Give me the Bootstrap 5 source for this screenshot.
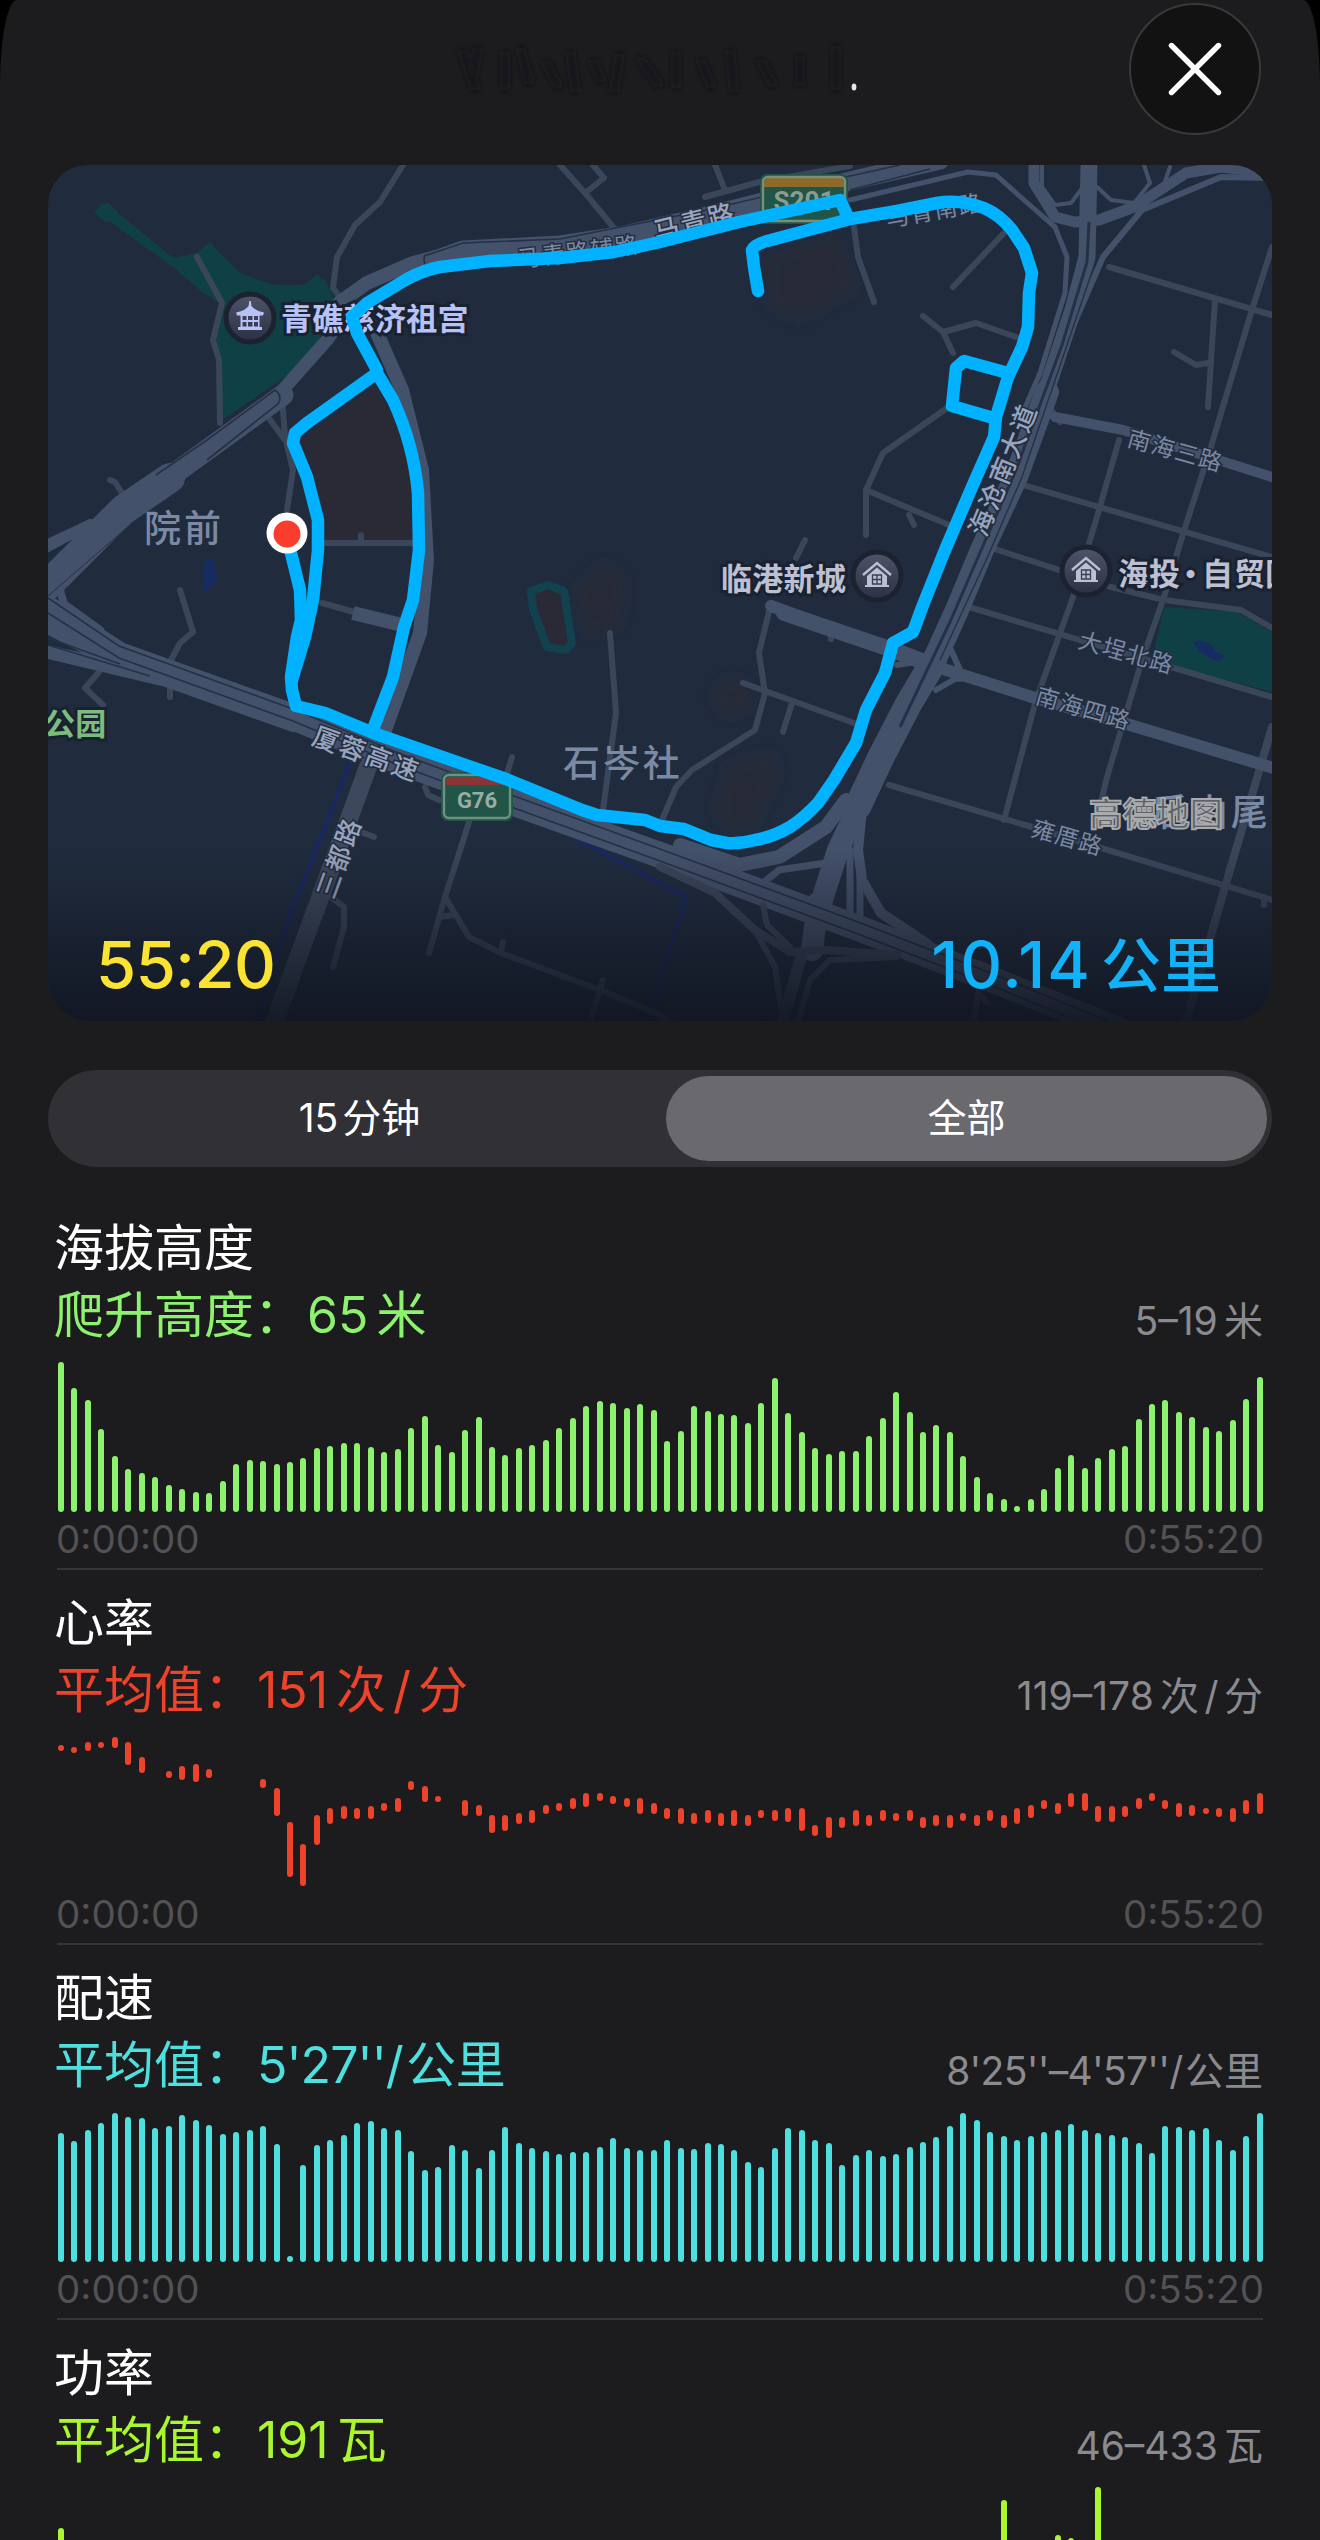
<!doctype html>
<html lang="zh-CN">
<head>
  <meta charset="utf-8">
  <meta name="viewport" content="width=device-width, initial-scale=1">
  <title>体能训练路线</title>
  <link href="https://cdn.jsdelivr.net/npm/bootstrap@5.3.0/dist/css/bootstrap.min.css" rel="stylesheet">

  <style>
    body {
      background: #000;
      color: #fff;
      font-family: Inter, "Noto Sans CJK SC", sans-serif;
    }
    .sheet {
      height: 2540px;
      padding: 0 48px;
      background: #1c1c1e;
      border-radius: 17px 17px 0 0 / 85px 85px 0 0;
      overflow: hidden;
    }
    .top-bar {
      height: 165px;
      padding: 3px 11px 0 0;
    }
    .top-bar .smear {
      width: 420px;
      height: 80px;
      margin: 26px 269px 0 0;
    }
    .close-btn {
      width: 132px;
      height: 132px;
      background: #121213;
      border: 2px solid #39393b;
    }
    .map-card {
      height: 856px;
      border-radius: 40px;
      background: #202c3e;
    }
    .map-card svg {
      display: block;
      font-family: "Noto Sans CJK SC", sans-serif;
    }
    .map-stats {
      left: 48px;
      right: 51px;
      bottom: 7px;
      font-size: 65px;
      line-height: 96px;
      font-weight: 500;
    }
    .map-stats .time { color: #fbe334; letter-spacing: -.5px; }
    .map-stats .dist { color: #12b2f8; letter-spacing: 2px; }
    .map-stats .dist span { font-size: 60px; letter-spacing: 0; margin-left: 9px; }

    .segments {
      height: 97px;
      margin-top: 49px;
      padding: 6px 5px;
      background: #313035;
      font-size: 39px;
    }
    .segments .seg-left { width: 613px; }
    .segments .active { background: #6a696e; }

    .metric {
      height: 375px;
      padding-top: 20px;
      margin: 0 9px;
      border-bottom: 2px solid #353537;
      white-space: nowrap;
    }
    .metric .name,
    .metric .value {
      font-size: 50px;
      line-height: 67px;
      margin-left: -3px;
    }
    .metric .value b { font-weight: 400; margin-left: 3px; }
    .metric .range {
      font-size: 39px;
      line-height: 56px;
      color: #8b8b8f;
    }
    .metric .unit { margin-left: .16em; }
    .metric .slash { margin: 0 .14em; }
    .pace .value b,
    .pace .range { letter-spacing: -.018em; }
    .pace .unit { margin-left: .06em; letter-spacing: 0; }
    .metric .value { color: var(--tint); }
    .bars {
      height: 150px;
      margin: 13px 0 -1px 1px;
    }
    .bars i {
      width: 6px;
      border-radius: 3px;
      background: var(--tint);
    }
    .ticks {
      font-size: 38.5px;
      line-height: 56px;
      color: #525255;
      margin: 0 -1px;
    }
    .alt { --tint: #8df26e; }
    .heart { --tint: #ee432b; }
    .pace { --tint: #4ee0df; }
    .power { --tint: #a9f72c; }

    .rd { fill: none; stroke: #43516a; stroke-linejoin: round; stroke-linecap: round; }
    .minor { stroke: #3a465a; stroke-width: 6; }
    .slit { fill: none; stroke: #243146; stroke-width: 1.6; }
    .poi { font-size: 31px; font-weight: 700; paint-order: stroke; stroke: #1a2231; stroke-width: 6; fill: #bcc0d2; letter-spacing: .3px; }
    .area { font-size: 37px; font-weight: 500; fill: #7c89a3; letter-spacing: 2.9px; }
    .road-name { font-size: 23px; fill: #7b88a2; text-anchor: middle; dominant-baseline: central; paint-order: stroke; stroke: #222d40; stroke-width: 3; letter-spacing: 1.5px; }
    .road-main { font-size: 26px; fill: #98a4bd; letter-spacing: 2px; font-weight: 500; }
  </style>
</head>
<body>
  <div class="sheet">
    <header class="top-bar d-flex justify-content-end align-items-start">
      <svg class="smear" viewBox="440 29 420 80">
        <defs><filter id="soft"><feGaussianBlur stdDeviation="3"/></filter></defs>
        <g fill="none" stroke="#18181a" stroke-width="6" filter="url(#soft)">
          <path d="M462 50l14 40M478 48l-6 34M505 52v38M520 48l10 36M545 62l14 26M570 52l6 40M592 60l10 22M620 54l-6 38M640 58l20 28M676 52v36M700 60l12 28M730 50l4 42M760 60l14 26M800 56v30M836 46v44"/>
        </g>
        <ellipse cx="854" cy="87" rx="2.4" ry="3.6" fill="#e8e8e8"/>
      </svg>
      <button type="button" class="close-btn rounded-circle d-flex align-items-center justify-content-center p-0" aria-label="关闭">
        <svg width="54" height="54" viewBox="0 0 54 54" stroke="#fff" stroke-width="5.4" stroke-linecap="round">
          <path d="M3.5 3.5l47 47M50.5 3.5l-47 47"/>
        </svg>
      </button>
    </header>

    <div class="map-card position-relative overflow-hidden">
      <svg width="1224" height="856" viewBox="48 165 1224 856">
        <defs>
          <linearGradient id="fade" x1="0" y1="0" x2="0" y2="1">
            <stop offset="0" stop-color="#10141f" stop-opacity="0"/>
            <stop offset="1" stop-color="#10141f" stop-opacity=".88"/>
          </linearGradient>
          <linearGradient id="pin" x1="0" y1="0" x2="0" y2="1">
            <stop offset="0" stop-color="#50546a"/>
            <stop offset="1" stop-color="#2c3044"/>
          </linearGradient>
          <filter id="haze"><feGaussianBlur stdDeviation="6"/></filter>
        </defs>

        <!-- 地块 -->
        <g fill="#2a2a36">
          <path d="M377 385L400 430L415 500L416 540L325 540L318 500L298 443z"/>
          <g filter="url(#haze)" opacity=".65">
            <path d="M765 255l75 -20l15 55l-55 30l-30 -15z"/>
            <path d="M575 590l30 -28l20 20l-5 45l-35 8z"/>
            <circle cx="733" cy="697" r="18"/>
            <path d="M728 765l45 -12l5 20l-22 50l-25 8l-16 -20z"/>
          </g>
        </g>
        <path fill="#0f4045" d="M102 203L118 213L173 258L197 253L210 242L217 250L240 273L273 285L303 285L317 275L325 280L335 300L320 337L300 367L222 420L219 360L213 340L220 303L203 293L177 270L112 223L95 212z"/>
        <path fill="#0f4045" stroke="#0f4045" stroke-width="6" stroke-linejoin="round" d="M107 206L115 213L106 219L98 212z"/>
        <path fill="#0f4045" d="M1164 607L1237 612L1272 632L1272 692L1152 660z"/>
        <path fill="#152c62" d="M1194 642q10 -4 19 5q4 8 13 9l-7 5q-22 -6 -25 -19zM205 560l8 0l4 22l-14 10z"/>
        <path fill="#2a2a36" stroke="#12414f" stroke-width="8" stroke-linejoin="round" d="M548 585L531 591L533 609L547 647L566 650L572 643L564 591z"/>
        <g fill="none" stroke="#1a2860" stroke-width="4">
          <path d="M350 763L293 907L255 1022"/>
          <path d="M566 833L660 883L686 897L660 980L650 1022"/>
        </g>

        <!-- 支路 -->
        <g class="rd minor">
          <path d="M403 165L380 202L355 225L337 257L333 288L343 302"/>
          <path d="M197 257L222 303L213 340L219 360L220 423"/>
          <path d="M122 493L115 482L110 480"/>
          <path d="M282 397L285 437L293 470L287 510M268 417L285 440"/>
          <path d="M180 590L193 632L180 643L170 662V697"/>
          <path d="M99 672L85 688L103 705"/>
          <path d="M323 543H413M361 535V543M322 603L400 625"/>
          <path d="M610 633L616 713L603 810M512 757L506 777"/>
          <path d="M469 822L445 897L429 953M445 897L469 937L501 953L600 990L660 1015L675 1024M439 917L455 915M503 942L501 952M603 980L590 1022"/>
          <path d="M332 898L344 907V927L333 967M356 830L374 837M425 787L428 795L439 800"/>
          <path d="M560 165L585 193L614 228M593 165L604 178L585 193M715 165L725 190M705 197L759 182L850 166"/>
          <path d="M854 227L858 257L874 302M1004 233L953 287"/>
          <path d="M923 316L943 332L953 353M943 332L976 323L1016 337"/>
          <path d="M947 408L883 453L866 490V535M866 490L949 525M909 515L914 525M805 540L796 558"/>
          <path d="M1109 267L1272 315M1215 300L1208 407M1174 352L1196 365L1208 363"/>
          <path d="M1272 247L1251 313L1210 450L1182 537L1164 597L1142 660L1107 777L1098 815"/>
          <path d="M1119 440L1099 510L1073 597L1036 700L1004 820"/>
          <path d="M1016 483L1272 557M992 548L1059 570L1111 587L1164 600L1241 610L1272 628"/>
          <path d="M972 608L1272 697M1049 407L1060 422"/>
          <path d="M771 603L759 653L765 693L755 730L692 770L676 787L662 820M743 683L854 723M792 703L783 732M831 632V639"/>
          <path d="M889 785L1032 827L1272 900M1264 897V905"/>
          <path d="M978 993L974 1022M978 993L988 1003"/>
        </g>
        <g class="rd" stroke-width="8">
          <path d="M1272 727L1225 887L1186 1022" stroke="#3a465a"/>
          <path d="M1055 417L1123 430L1272 477" stroke-width="10"/>
          <path d="M353 613L402 625" stroke-width="14" stroke-linecap="butt"/>
        </g>

        <!-- 主干道 -->
        <g class="rd">
          <path stroke-width="14" d="M377 333L402 390L422 470L427 560L420 633L384 733L368 767"/>
          <path stroke-width="18" stroke="#3c485c" d="M368 767L273 1026"/>
          <path stroke-width="14" d="M340 302L367 283L413 263L463 250"/>
          <path stroke-width="19" d="M430 262L463 250L560 245L620 236L707 216L759 203L850 181L940 160"/>
          <path stroke-width="5" d="M850 200L968 172L996 175L1024 200L1055 227L1067 257L1065 293L1040 373L1024 410"/>
          <path stroke-width="13" d="M350 307L327 340L280 393"/>
          <path stroke-width="21" d="M283 395L207 450L160 484"/>
          <path stroke-width="30" d="M170 478L123 510L48 585"/>
          <path stroke-width="8" d="M48 543L90 523M48 548L100 520M60 590L64 604L100 630"/>
          <path stroke-width="26" d="M40 604L119 655L293 717L396 760L514 803L660 855L858 928L988 978L1119 1030"/>
          <path stroke-width="14" d="M40 650L166 680L293 725M44 625L130 670"/>
          <path stroke-width="11" d="M1034 165L1034 183L1055 217L1075 222L1099 220L1134 207L1186 173L1221 167L1272 173"/>
          <path stroke-width="6" d="M1272 178L1221 177L1142 210L1103 257L1083 303L1067 340"/>
          <path stroke-width="4" d="M1042 165L1042 187L1055 205L1071 203L1083 187M1097 187L1111 200L1134 203L1150 183L1144 165M1170 167L1162 190"/>
          <path stroke-width="17" d="M1089 165L1087 257L1073 310L1043 400"/>
          <path stroke-width="24" d="M1047 392L1016 477L982 550L957 610L933 663"/>
          <path stroke-width="27" d="M933 663L909 703L881 757L858 806"/>
          <path stroke-width="22" d="M862 800L838 850L822 900M818 903L812 950"/>
          <path stroke-width="16" d="M784 613L893 650L937 667"/>
          <path stroke-width="12" d="M937 667L1032 697L1130 725L1280 770M771 606L790 613"/>
          <path stroke-width="6" d="M936 690L955 679L970 678M951 650L961 672M897 665L915 662"/>
          <path stroke-width="14" d="M680 845L739 865L779 857L826 827L846 800"/>
          <path stroke-width="10" d="M862 810L858 850L862 880L881 913L929 945"/>
          <path stroke-width="7" d="M850 850V920M860 870V926M763 883L779 870L826 863"/>
          <path stroke-width="8" d="M660 867L715 893L755 930L790 952L826 950L897 955" stroke="#3a465a"/>
          <path stroke-width="6" d="M755 930L775 967L783 1022M897 957L830 960L810 980L798 1022M763 905L767 925L790 947" stroke="#3a465a"/>
          <path stroke-width="12" d="M801 957L782 1024" stroke="#3a465a"/>
        </g>
        <g class="slit">
          <path d="M48 598L119 646L293 709L396 752L514 796L660 849L858 922L988 972L1110 1022"/>
          <path d="M48 613L119 658L293 721L396 764L514 808L660 861L858 934L988 984L1080 1022"/>
          <path d="M48 638L120 664M48 645L150 676"/>
          <path d="M156 475L207 440L275 390q8 6 3 14L250 426L207 460"/>
          <path d="M48 596L130 525L250 440" stroke-width="1"/>
          <path d="M425 255q-3 7 3 12M424 256L463 243L560 239L707 210L850 176L900 165"/>
          <path d="M850 190L930 169"/>
          <path d="M1089 222L1087 262L1062 345L1016 470L982 548L950 622L900 727" stroke-width="3"/>
          <path d="M1096 260L1022 477L988 556L940 660" stroke-width="1.4"/>
        </g>

        <!-- 道路名 -->
        <text class="road-name road-main" transform="translate(694 220) rotate(-14)">马青路</text>
        <text class="road-name" transform="translate(578 250) rotate(-7)">马青路辅路</text>
        <text class="road-name" transform="translate(934 209) rotate(-10)">马青南路</text>
        <text class="road-name road-main" transform="translate(1001 469) rotate(-68)">海沧南大道</text>
        <text class="road-name road-main" transform="translate(337 857) rotate(-70)">三都路</text>
        <text class="road-name road-main" transform="translate(367 752) rotate(20)">厦蓉高速</text>
        <text class="road-name" transform="translate(1176 449) rotate(15.5)">南海三路</text>
        <text class="road-name" transform="translate(1127 651) rotate(15.5)">大埕北路</text>
        <text class="road-name" transform="translate(1084 707) rotate(16)">南海四路</text>
        <text class="road-name" transform="translate(1068 836) rotate(16)">雍厝路</text>

        <!-- 路牌 -->
        <g font-family="Roboto" font-weight="700" text-anchor="middle">
          <rect x="760" y="174" width="88" height="50" rx="7" fill="#205547"/>
          <path fill="#8d6a29" d="M764 187v-4q0 -5 5 -5h70q5 0 5 5v4z"/>
          <rect x="763" y="177" width="82" height="44" rx="5" fill="none" stroke="#7b8f78" stroke-width="2.4"/>
          <text x="804" y="210" font-size="26" fill="#8b9d90">S201</text>
          <rect x="441" y="772" width="72" height="49" rx="7" fill="#205547"/>
          <path fill="#8b3437" d="M446 785v-4q0 -4 5 -4h53q5 0 5 4v4z"/>
          <rect x="444" y="775" width="66" height="43" rx="5" fill="none" stroke="#6f9181" stroke-width="2.4"/>
          <text x="477" y="808" font-size="22" fill="#9aaca3">G76</text>
        </g>

        <!-- 地名 -->
        <text class="area" x="144" y="542">院前</text>
        <text class="area" x="563" y="777">石岑社</text>
        <text class="area" x="1151" y="826">后山尾</text>
        <text class="poi" x="44" y="735" style="fill: #7cbc7c">公园</text>
        <text class="poi" x="281" y="330" style="fill: #b7c2f6">青礁慈济祖宫</text>
        <text class="poi" x="721" y="590">临港新城</text>
        <text class="poi" x="1118 1149 1175 1202 1234 1265" y="585">海投·自贸国</text>
        <text x="1089" y="826" font-size="33.5" font-weight="700" fill="#5f6166" stroke="#a9abad" stroke-width="1.8">高德地图</text>

        <!-- 兴趣点图标 -->
        <g fill="url(#pin)" stroke="#1c2230" stroke-width="5">
          <circle cx="250" cy="318" r="24"/>
          <circle cx="877" cy="576" r="24"/>
          <circle cx="1086" cy="571" r="24"/>
        </g>
        <path fill="#b7c2f6" d="M249.3 301h1.6l.5 5q4 5 12.6 6.5l-1 3h-3.5v11.5h2.5v3h-24v-3h2.500v-11.500h-3.500l-1 -3q8.600 -1.500 12.600 -6.500zM242.500 316v4h4v-4zM248 316v4h4.500v-4zM254 316v4h4v-4zM242.500 322v4.500h4v-4.500zM248 322v4.500h4.500v-4.500zM254 322v4.500h4v-4.500zM238 327h24v3h-24z"/>
        <g fill="none" stroke="#bcc0d2">
          <g transform="translate(877 576)">
            <path stroke-width="2.4" d="M-14 -1L0 -13L14 -1"/>
            <path fill="#bcc0d2" stroke="none" d="M-10 0L0 -8.5L10 0V9H12V11H-12V9H-10z"/>
            <path stroke="#3a3e52" stroke-width="1.3" d="M-4.5 -1h9v9h-9zM0 -1v9M-4.5 3.5h9"/>
          </g>
          <g transform="translate(1086 571)">
            <path stroke-width="2.4" d="M-14 -1L0 -13L14 -1"/>
            <path fill="#bcc0d2" stroke="none" d="M-10 0L0 -8.5L10 0V9H12V11H-12V9H-10z"/>
            <path stroke="#3a3e52" stroke-width="1.3" d="M-4.5 -1h9v9h-9zM0 -1v9M-4.5 3.5h9"/>
          </g>
        </g>

        <!-- 跑步路线 -->
        <g fill="none" stroke="#00b2ff" stroke-width="12.5" stroke-linejoin="round" stroke-linecap="round">
          <path d="M758 291L754 267L752 250Q754 244 771 240L850 219L897 211L937 203Q960 199 984 208Q1000 215 1012 230L1024 248L1032 273L1029 293L1028 327L1022 347L1008 377L996 417L994 437L972 487L945 550L923 605L913 632L893 643L885 673L866 710L856 743L834 780L818 803Q804 818 790 827Q773 837 755 840Q740 844 727 843L711 840L684 829L660 826L645 820L597 815L582 810L506 779L376 734L325 713L296 706L292 690L291 677L297 637L301 620L300 590L291 553L287 533"/>
          <path d="M292 680L305 637L313 600L318 550L318 520L307 477L293 443L295 433L307 423L377 373L393 400Q404 424 410 447Q416 470 418 493L419 550L413 600L404 627L393 677L372 732"/>
          <path d="M377 370L357 333L352 317L367 303L407 279Q424 270 440 267L490 261L560 258L614 252L660 242L739 222L840 200L848 217"/>
          <path d="M1008 373L964 361L956 368L952 406L990 417"/>
        </g>
        <circle cx="287" cy="533" r="20.5" fill="#fff"/>
        <circle cx="287" cy="534" r="13.5" fill="#fb3d2e"/>
        <rect x="48" y="850" width="1224" height="172" fill="url(#fade)"/>
      </svg>
      <div class="map-stats position-absolute d-flex justify-content-between">
        <div class="time">55:20</div>
        <div class="dist">10.14<span>公里</span></div>
      </div>
    </div>

    <div class="segments rounded-pill d-flex text-center">
      <div class="seg-left d-flex align-items-center justify-content-center">15<span class="ms-1">分钟</span></div>
      <div class="active flex-grow-1 rounded-pill d-flex align-items-center justify-content-center">全部</div>
    </div>

    <main class="pt-4 mt-1">
      <section class="metric alt">
        <div class="name">海拔高度</div>
        <div class="d-flex justify-content-between align-items-end">
          <div class="value">爬升高度：<b>65<span class="unit">米</span></b></div>
          <div class="range">5–19<span class="unit">米</span></div>
        </div>
        <div class="bars d-flex justify-content-between align-items-end" data-chart="alt"></div>
        <div class="ticks d-flex justify-content-between"><span>0:00:00</span><span>0:55:20</span></div>
      </section>

      <section class="metric heart">
        <div class="name">心率</div>
        <div class="d-flex justify-content-between align-items-end">
          <div class="value">平均值：<b>151<span class="unit">次<span class="slash">/</span>分</span></b></div>
          <div class="range">119–178<span class="unit">次<span class="slash">/</span>分</span></div>
        </div>
        <div class="bars d-flex justify-content-between align-items-start" data-chart="heart"></div>
        <div class="ticks d-flex justify-content-between"><span>0:00:00</span><span>0:55:20</span></div>
      </section>

      <section class="metric pace">
        <div class="name">配速</div>
        <div class="d-flex justify-content-between align-items-end">
          <div class="value">平均值：<b>5'27''/<span class="unit">公里</span></b></div>
          <div class="range">8'25''–4'57''/<span class="unit">公里</span></div>
        </div>
        <div class="bars d-flex justify-content-between align-items-end" data-chart="pace"></div>
        <div class="ticks d-flex justify-content-between"><span>0:00:00</span><span>0:55:20</span></div>
      </section>

      <section class="metric power border-0">
        <div class="name">功率</div>
        <div class="d-flex justify-content-between align-items-end">
          <div class="value">平均值：<b>191<span class="unit">瓦</span></b></div>
          <div class="range">46–433<span class="unit">瓦</span></div>
        </div>
        <div class="bars d-flex justify-content-between align-items-end" data-chart="power"></div>
      </section>
    </main>
  </div>

  <script src="https://cdn.jsdelivr.net/npm/bootstrap@5.3.0/dist/js/bootstrap.bundle.min.js"></script>
  <script>
    // 每个值是柱高；心率为 [起点, 长度]，null 表示没有数据
    const power = Array(90).fill(60);
    Object.assign(power, { 0: 109, 70: 137, 74: 102, 75: 99, 77: 150 });

    const charts = {
      alt: [150,124,112,83,56,43,39,35,27,23,20,19,31,48,52,51,48,50,54,64,66,69,69,65,60,63,84,96,67,60,82,95,65,57,64,67,72,84,94,106,111,109,104,108,102,
        71,81,106,101,98,97,89,109,134,99,80,64,58,61,61,76,94,120,100,80,87,80,56,35,19,13,6,13,23,44,57,44,54,63,66,93,108,112,100,95,85,81,92,113,135],
      heart: [[8,6],[10,6],[5,9],[5,6],[0,11],[5,23],[20,16],null,[34,7],[29,14],[27,18],[32,9],null,null,null,[42,9],[51,28],[85,55],[107,42],[78,30],[71,16],[69,13],[71,11],[69,13],[66,8],[61,14],[44,9],[49,16],[59,6],null,[63,16],[68,11],[78,18],[78,16],[76,11],[73,13],[68,9],[66,8],[61,11],[56,14],[56,8],[59,8],[61,9],[61,16],[66,11],
        [71,11],[71,16],[76,11],[73,13],[76,13],[73,16],[78,11],[73,8],[73,11],[71,14],[71,23],[88,11],[80,21],[80,11],[73,16],[78,11],[73,11],[76,8],[73,11],[80,11],[78,11],[78,13],[76,8],[78,11],[73,11],[78,13],[71,16],[68,13],[63,9],[66,11],[56,14],[56,18],[69,16],[69,16],[69,11],[61,11],[56,8],[63,9],[66,14],[68,11],[71,6],[71,9],[71,14],[63,14],[56,21]],
      pace: [129,121,132,139,149,145,144,134,136,147,142,137,128,130,132,136,118,6,97,117,122,127,139,141,134,132,111,92,95,117,112,94,112,135,119,114,111,108,110,110,115,124,114,112,112,
        122,114,113,119,118,112,100,95,114,134,132,122,119,97,107,112,106,108,115,120,125,136,149,142,130,126,122,126,130,132,138,132,129,127,125,119,109,136,135,132,134,122,112,126,149],
      power: power
    };

    document.querySelectorAll('[data-chart]').forEach(el => {
      charts[el.dataset.chart].forEach(v => {
        const bar = document.createElement('i');
        if (Array.isArray(v)) {
          bar.style.marginTop = v[0] + 'px';
          bar.style.height = v[1] + 'px';
        } else {
          bar.style.height = (v || 0) + 'px';
        }
        el.appendChild(bar);
      });
    });
  </script>
</body>
</html>
